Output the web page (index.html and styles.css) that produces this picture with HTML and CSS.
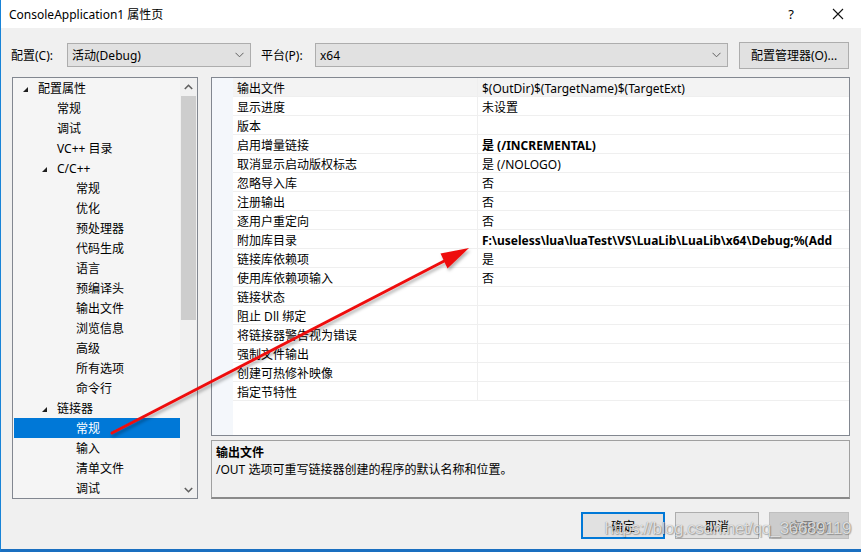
FILE: index.html
```html
<!DOCTYPE html>
<html lang="zh-CN">
  <head>
    <meta charset="UTF-8" />
    <meta name="viewport" content="width=device-width, initial-scale=1.0" />
    <title>ConsoleApplication1 属性页</title>
    <link rel="stylesheet" href="styles.css">
  </head>
  <body>
    <div class="dialog">
      <div class="titlebar">
        <span class="title">ConsoleApplication1 属性页</span>
        <span class="help">?</span>
        <svg class="close" width="12" height="12" viewBox="0 0 12 12">
          <path d="M1 1 L11 11 M11 1 L1 11" stroke="#111" stroke-width="1.1" fill="none" />
        </svg>
      </div>

      <div class="toolbar">
        <label class="tb-label">配置(C):</label>
        <div class="combo combo-config">
          <span>活动(Debug)</span>
          <svg width="9" height="6" viewBox="0 0 9 6"><polyline points="0.5,0.8 4.5,4.8 8.5,0.8" fill="none" stroke="#606060" stroke-width="1" /></svg>
        </div>
        <label class="tb-label platform">平台(P):</label>
        <div class="combo combo-platform">
          <span>x64</span>
          <svg width="9" height="6" viewBox="0 0 9 6"><polyline points="0.5,0.8 4.5,4.8 8.5,0.8" fill="none" stroke="#606060" stroke-width="1" /></svg>
        </div>
        <button class="btn mgr">配置管理器(O)...</button>
      </div>

      <div class="main">
        <!-- tree -->
        <div class="tree">
          <ul class="tree-list">
            <li class="lv0"><i class="tri"></i>配置属性</li>
            <li class="lv1">常规</li>
            <li class="lv1">调试</li>
            <li class="lv1">VC++ 目录</li>
            <li class="lv1"><i class="tri"></i>C/C++</li>
            <li class="lv2">常规</li>
            <li class="lv2">优化</li>
            <li class="lv2">预处理器</li>
            <li class="lv2">代码生成</li>
            <li class="lv2">语言</li>
            <li class="lv2">预编译头</li>
            <li class="lv2">输出文件</li>
            <li class="lv2">浏览信息</li>
            <li class="lv2">高级</li>
            <li class="lv2">所有选项</li>
            <li class="lv2">命令行</li>
            <li class="lv1"><i class="tri"></i>链接器</li>
            <li class="lv2 selected">常规</li>
            <li class="lv2">输入</li>
            <li class="lv2">清单文件</li>
            <li class="lv2">调试</li>
          </ul>
          <div class="scrollbar">
            <div class="sb-btn">
              <svg width="9" height="6" viewBox="0 0 9 6"><polyline points="0.8,5 4.5,1.3 8.2,5" fill="none" stroke="#606060" stroke-width="1.6" /></svg>
            </div>
            <div class="sb-track">
              <div class="sb-thumb"></div>
            </div>
            <div class="sb-btn">
              <svg width="9" height="6" viewBox="0 0 9 6"><polyline points="0.8,1 4.5,4.7 8.2,1" fill="none" stroke="#606060" stroke-width="1.6" /></svg>
            </div>
          </div>
        </div>

        <!-- property grid + description -->
        <div class="right">
          <div class="grid">
            <div class="gutter"></div>
            <div class="rows">
              <div class="row current"><div class="name">输出文件</div><div class="val">$(OutDir)$(TargetName)$(TargetExt)</div></div>
              <div class="row"><div class="name">显示进度</div><div class="val">未设置</div></div>
              <div class="row"><div class="name">版本</div><div class="val"></div></div>
              <div class="row"><div class="name">启用增量链接</div><div class="val bold">是 (/INCREMENTAL)</div></div>
              <div class="row"><div class="name">取消显示启动版权标志</div><div class="val">是 (/NOLOGO)</div></div>
              <div class="row"><div class="name">忽略导入库</div><div class="val">否</div></div>
              <div class="row"><div class="name">注册输出</div><div class="val">否</div></div>
              <div class="row"><div class="name">逐用户重定向</div><div class="val">否</div></div>
              <div class="row"><div class="name">附加库目录</div><div class="val bold">F:\useless\lua\luaTest\VS\LuaLib\LuaLib\x64\Debug;%(Add</div></div>
              <div class="row"><div class="name">链接库依赖项</div><div class="val">是</div></div>
              <div class="row"><div class="name">使用库依赖项输入</div><div class="val">否</div></div>
              <div class="row"><div class="name">链接状态</div><div class="val"></div></div>
              <div class="row"><div class="name">阻止 Dll 绑定</div><div class="val"></div></div>
              <div class="row"><div class="name">将链接器警告视为错误</div><div class="val"></div></div>
              <div class="row"><div class="name">强制文件输出</div><div class="val"></div></div>
              <div class="row"><div class="name">创建可热修补映像</div><div class="val"></div></div>
              <div class="row"><div class="name">指定节特性</div><div class="val"></div></div>
            </div>
          </div>
          <div class="desc">
            <div class="desc-title">输出文件</div>
            <div class="desc-text">/OUT 选项可重写链接器创建的程序的默认名称和位置。</div>
          </div>
        </div>
      </div>

      <div class="footer">
        <button class="btn ok">确定</button>
        <button class="btn">取消</button>
        <button class="btn disabled">应用(A)</button>
      </div>

      <!-- annotation arrow drawn over the dialog -->
      <svg class="arrow" width="861" height="552" viewBox="0 0 861 552">
        <defs>
          <filter id="shadow" x="-10%" y="-10%" width="120%" height="120%">
            <feDropShadow dx="1.5" dy="2.5" stdDeviation="1.5" flood-color="#000" flood-opacity="0.3" />
          </filter>
        </defs>
        <g filter="url(#shadow)">
          <line x1="112" y1="433" x2="450" y2="258" stroke="#ee1111" stroke-width="3" stroke-linecap="round" />
          <polygon points="469,248 447.5,268.5 440.5,253.5" fill="#ee1111" />
        </g>
      </svg>
      <div class="watermark">https://blog.csdn.net/qq_36689119</div>
    </div>
  </body>
</html>
```

FILE: styles.css
```css
* {
  margin: 0;
  padding: 0;
  box-sizing: border-box;
}

body {
  font-family: "Noto Sans", "Noto Sans CJK SC", sans-serif;
  font-size: 12px;
  color: #000;
  background: #f0f0f0;
}

.dialog {
  position: relative;
  width: 861px;
  height: 552px;
  background: #f0f0f0;
  border-left: 1px solid #1883d7;
  border-bottom: 3px solid #1a6fc0;
  display: flex;
  flex-direction: column;
  overflow: hidden;
}

/* title bar */
.titlebar {
  height: 28px;
  background: #fff;
  display: flex;
  align-items: center;
  padding-left: 8px;
}

.title {
  flex: 1;
  font-size: 12px;
}

.help {
  font-size: 13px;
  margin-right: 38px;
}

.close {
  margin-right: 17px;
}

/* toolbar */
.toolbar {
  display: flex;
  align-items: center;
  height: 28px;
  margin-top: 13px;
  padding-left: 10px;
}

.tb-label {
  width: 56px;
}

.tb-label.platform {
  margin-left: 10px;
  width: 54px;
}

.combo {
  height: 24px;
  background: #e1e1e1;
  border: 1px solid #adadad;
  display: flex;
  align-items: center;
  justify-content: space-between;
  padding: 0 6px 0 4px;
}

.combo-config {
  width: 184px;
}

.combo-platform {
  width: 413px;
}

.btn {
  font-family: inherit;
  font-size: 12px;
  color: #000;
  background: #e1e1e1;
  border: 1px solid #adadad;
  height: 27px;
}

.mgr {
  width: 110px;
  margin-left: 11px;
}

/* main area */
.main {
  display: flex;
  margin-top: 8px;
  padding-left: 11px;
  height: 422px;
}

.tree {
  width: 186px;
  border: 1px solid #828790;
  background: #f5f5f5;
  display: flex;
}

.tree-list {
  list-style: none;
  flex: 1;
  padding-left: 1px;
  overflow: hidden;
}

.tree-list li {
  height: 20px;
  line-height: 22px;
  position: relative;
  white-space: nowrap;
}

.tree-list .lv0 {
  padding-left: 24px;
}

.tree-list .lv1 {
  padding-left: 43px;
}

.tree-list .lv2 {
  padding-left: 62px;
}

.tree-list .selected {
  background: #0078d7;
  color: #fff;
}

.tri {
  position: absolute;
  width: 0;
  height: 0;
  border-left: 5px solid transparent;
  border-bottom: 5px solid #1e1e1e;
  margin-left: -15px;
  margin-top: 9px;
}

.scrollbar {
  width: 17px;
  background: #f0f0f0;
  display: flex;
  flex-direction: column;
}

.sb-btn {
  height: 17px;
  display: flex;
  align-items: center;
  justify-content: center;
}

.sb-track {
  flex: 1;
  padding: 1px 1px 0;
}

.sb-thumb {
  height: 224px;
  background: #cdcdcd;
}

.right {
  width: 639px;
  margin-left: 13px;
  display: flex;
  flex-direction: column;
}

/* property grid */
.grid {
  flex: 1;
  border: 1px solid #828790;
  background: #fff;
  display: flex;
}

.gutter {
  width: 21px;
  background: #f4f7fb;
}

.rows {
  flex: 1;
  overflow: hidden;
}

.row {
  display: flex;
  height: 19px;
  border-bottom: 1px solid #efefef;
}

.row.current {
  background: #f3f3f3;
}

.name {
  width: 245px;
  padding-left: 4px;
  padding-top: 3px;
  line-height: 16px;
  border-right: 1px solid #efefef;
  white-space: nowrap;
}

.val {
  flex: 1;
  padding-left: 4px;
  padding-top: 3px;
  line-height: 16px;
  white-space: nowrap;
  overflow: hidden;
}

.bold {
  font-weight: bold;
}

/* description panel */
.desc {
  height: 59px;
  margin-top: 4px;
  border: 1px solid #a0a0a0;
  border-bottom: 2px solid #8a8a8a;
  background: #f0f0f0;
  padding: 3px 4px;
  line-height: 17px;
}

.desc-title {
  font-weight: bold;
}

/* footer buttons */
.footer {
  display: flex;
  justify-content: flex-end;
  gap: 10px;
  padding: 13px 12px 0 0;
}

.footer .btn {
  width: 84px;
}

.btn.ok {
  border: 2px solid #0078d7;
}

.btn.disabled {
  background: #cccccc;
  border-color: #bfbfbf;
  color: #838383;
  width: 80px;
}

/* overlays */
.arrow {
  position: absolute;
  left: -1px;
  top: 0;
  pointer-events: none;
}

.watermark {
  position: absolute;
  right: 10px;
  bottom: 10px;
  font-family: "Liberation Sans", sans-serif;
  font-size: 17px;
  letter-spacing: -0.4px;
  color: rgba(255, 255, 255, 0.75);
  text-shadow: 0 0 1px rgba(0, 0, 0, 0.45), 1px 1px 1px rgba(0, 0, 0, 0.25);
  pointer-events: none;
}
```
